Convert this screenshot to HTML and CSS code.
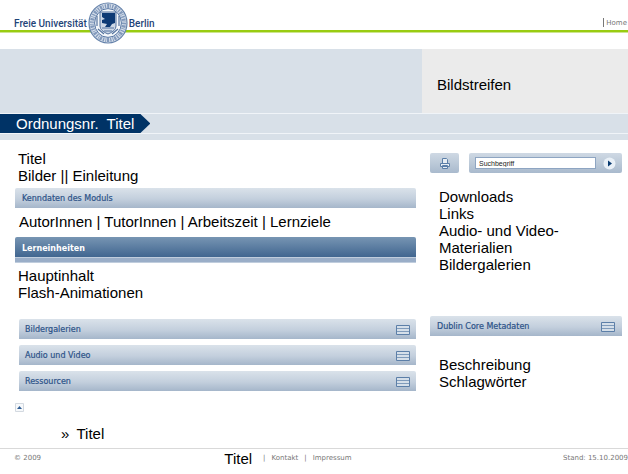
FILE: index.html
```html
<!DOCTYPE html>
<html lang="de">
<head>
    <meta charset="UTF-8">
    <meta name="viewport" content="width=device-width, initial-scale=1.0">
    <title>Freie Universität Berlin</title>
    <link rel="stylesheet" href="styles.css">
</head>
<body>
    <header class="header">
        <a class="logo" href="#">
            <span>Freie Universität</span>
            <svg class="seal" viewBox="0 0 40 42" aria-hidden="true">
                <ellipse cx="20" cy="21" rx="19" ry="20" fill="#d5deea" stroke="#6683ab" stroke-width="1.2"/>
                <ellipse cx="20" cy="21" rx="16" ry="17" fill="none" stroke="#8299bb" stroke-width="4" stroke-dasharray="1.3 1.1 2.2 .8 .8 1.2"/>
                <ellipse cx="20" cy="21" rx="13.4" ry="14.4" fill="#f4f7fa" stroke="#5575a3" stroke-width="1"/>
                <path d="M12 10v14q0 5 8 8q8-3 8-8V10z" fill="#cdd8e6" stroke="#55739f"/>
                <path d="M14 11h13v10l-3 1-2 3h-5l2-3-5-1v-3l3-1-3-2z" fill="#0d3a75"/>
                <path d="M9 14v10M31 14v10M10 27l6 5M30 27l-6 5M14 26h12M16 29h8" stroke="#55739f" stroke-width="1.2" fill="none"/>
            </svg>
            <span>Berlin</span>
        </a>
        <a class="home" href="#">Home</a>
    </header>

    <div class="hero">
        <div class="hero-image"></div>
        <div class="hero-strip">Bildstreifen</div>
    </div>
    <div class="title-band">
        <h1 class="title-arrow">Ordnungsnr.&nbsp; Titel</h1>
    </div>

    <main class="main">
        <div class="content">
            <div class="text">Titel<br>Bilder || Einleitung</div>
            <h2 class="bar">Kenndaten des Moduls</h2>
            <div class="text meta">AutorInnen | TutorInnen | Arbeitszeit | Lernziele</div>
            <h2 class="bar bar-dark">Lerneinheiten</h2>
            <div class="text">Hauptinhalt<br>Flash-Animationen</div>
            <div class="panels">
                <button class="bar">Bildergalerien
                    <svg class="list-icon" viewBox="0 0 14 10" aria-hidden="true"><path d="M.5.5h13v9H.5z" fill="#d5dfe9" stroke="#5c7fa8"/><path d="M1 3.5h12M1 6.5h12" stroke="#7f9bbb"/></svg>
                </button>
                <button class="bar">Audio und Video
                    <svg class="list-icon" viewBox="0 0 14 10" aria-hidden="true"><path d="M.5.5h13v9H.5z" fill="#d5dfe9" stroke="#5c7fa8"/><path d="M1 3.5h12M1 6.5h12" stroke="#7f9bbb"/></svg>
                </button>
                <button class="bar">Ressourcen
                    <svg class="list-icon" viewBox="0 0 14 10" aria-hidden="true"><path d="M.5.5h13v9H.5z" fill="#d5dfe9" stroke="#5c7fa8"/><path d="M1 3.5h12M1 6.5h12" stroke="#7f9bbb"/></svg>
                </button>
            </div>
            <a class="top-link" href="#" aria-label="Nach oben">
                <svg viewBox="0 0 9 9" aria-hidden="true"><path d="M.5.5h8v8h-8z" fill="#f7f9fb" stroke="#d3d9e0"/><path d="M2 6l2.500-3L7 6z" fill="#2f5d94"/></svg>
            </a>
            <div class="next">»&nbsp;&thinsp;Titel</div>
        </div>

        <aside class="sidebar">
            <form class="tools">
                <button class="print" type="button" aria-label="Drucken">
                    <svg viewBox="0 0 10 11" aria-hidden="true"><path d="M2.500 5V.5h4l1 1V5M.5 8.500v-3h9v3zM2.500 7.500h5v3h-5z" fill="#e8eef4" stroke="#5c7fa8"/></svg>
                </button>
                <div class="search">
                    <input class="search-field" type="text" value="Suchbegriff" aria-label="Suchbegriff">
                    <button class="go" type="button" aria-label="Suchen">
                        <svg viewBox="0 0 13 13" aria-hidden="true"><circle cx="6.500" cy="6.500" r="6" fill="#e9f0f7"/><path d="M5 3.500l4 3-4 3z" fill="#083a70"/></svg>
                    </button>
                </div>
            </form>
            <div class="text links">Downloads<br>Links<br>Audio- und Video-<br>Materialien<br>Bildergalerien</div>
            <button class="bar">Dublin Core Metadaten
                <svg class="list-icon" viewBox="0 0 14 10" aria-hidden="true"><path d="M.5.5h13v9H.5z" fill="#d5dfe9" stroke="#5c7fa8"/><path d="M1 3.5h12M1 6.5h12" stroke="#7f9bbb"/></svg>
            </button>
            <div class="text description">Beschreibung<br>Schlagwörter</div>
        </aside>
    </main>

    <footer class="footer">
        <span>© 2009</span>
        <nav class="footer-nav">
            <span class="footer-title">Titel</span>
            <span>|</span>
            <a href="#">Kontakt</a>
            <span>|</span>
            <a href="#">Impressum</a>
        </nav>
        <span class="date">Stand: 15.10.2009</span>
    </footer>
</body>
</html>
```
FILE: styles.css
```css
* {
    box-sizing: border-box;
}
body {
    margin: 0;
    background: #fff;
    color: #000;
    font: 15px/17px "Liberation Sans", Arial, sans-serif;
}
a {
    color: inherit;
    text-decoration: none;
}
button {
    border: 0;
    padding: 0;
    cursor: pointer;
}
svg {
    display: block;
}
h1, h2 {
    margin: 0;
    font-weight: normal;
}

/* Header */
.header {
    display: flex;
    justify-content: space-between;
    height: 49px;
    padding: 2px 1px 0 14px;
    background: linear-gradient(#99cc11 2px, #cde58e 2px) 0 30px / 100% 3px no-repeat;
}
.logo {
    display: flex;
    gap: 1px;
    height: 42px;
    color: #1f4478;
    font: 500 10px/44px Roboto, Arial, sans-serif;
}
.seal {
    width: 40px;
    height: 42px;
}
.home {
    height: 9px;
    margin-top: 16px;
    padding-left: 2px;
    border-left: 1px solid #777;
    color: #777;
    font: 7px/10px "DejaVu Sans", Verdana, sans-serif;
}

/* Image strip */
.hero {
    display: grid;
    grid-template-columns: 422fr 206fr;
    height: 64px;
    background: #d8e0e8;
}
.hero-strip {
    padding: 27px 15px 0;
    background: #ebebeb;
}
.title-band {
    height: 27px;
    border-top: 1px solid #f0f4f8;
    background: linear-gradient(#d8e0e8 19px, #f0f4f8 19px, #f0f4f8 20px, #d8e0e8 20px);
}
.title-arrow {
    width: max-content;
    height: 19px;
    padding: 0 16px;
    background: #003366;
    clip-path: polygon(0 0, calc(100% - 10px) 0, 100% 50%, calc(100% - 10px) 100%, 0 100%);
    color: #fff;
    font-size: 15px;
    line-height: 19px;
}

/* Columns */
.main {
    display: grid;
    grid-template-columns: 401fr 192fr;
    gap: 14px;
    padding: 10px 6px 6px 15px;
}
.text {
    padding-left: 3px;
}
.bar {
    display: flex;
    align-items: center;
    justify-content: space-between;
    width: 100%;
    height: 20px;
    padding: 2px 7px 0;
    border-radius: 2px 2px 0 0;
    background: linear-gradient(#dae2ea, #c3cfdd 55%, #a5b6ca);
    color: #2c5288;
    font: 8px/18px "DejaVu Sans", Verdana, sans-serif;
    -webkit-text-stroke: 0.2px #2c5288;
}
.content > .bar {
    margin-top: 4px;
}
.content .meta {
    padding: 5px 0 3px 4px;
}
.content > .bar-dark {
    height: 26px;
    margin-bottom: 4px;
    padding-bottom: 5px;
    background: linear-gradient(#7795b3, #416690 20px, #c0cddd 20px, #c0cddd 21px, #9aaec8 21px, #9aaec8 25px, #c0cddd 25px);
    color: #fff;
    font-weight: bold;
    -webkit-text-stroke: 0;
}
.list-icon {
    width: 14px;
    height: 10px;
}
.panels {
    display: grid;
    gap: 6px;
    margin: 18px 0 12px 4px;
}
.panels .bar {
    padding: 1px 6px 0;
}
.top-link {
    display: block;
    width: 9px;
    height: 9px;
}
.next {
    margin-top: 13px;
    padding-left: 46px;
}

/* Sidebar */
.tools {
    display: flex;
    gap: 10px;
    margin: 3px 0 15px;
}
.print, .search {
    display: flex;
    align-items: center;
    height: 20px;
    border-radius: 2px;
    background: linear-gradient(#cfd9e4, #a9bacd);
}
.print {
    justify-content: center;
    width: 29px;
}
.print svg {
    width: 10px;
    height: 11px;
}
.search {
    flex: 1;
    gap: 7px;
    padding: 0 6px;
}
.search-field {
    flex: 1;
    min-width: 0;
    height: 12px;
    padding: 0 3px;
    border: 1px solid #8ea5c2;
    background: #fff;
    color: #222;
    font: 7px/10px "Liberation Sans", Arial, sans-serif;
}
.go {
    background: none;
}
.go svg {
    width: 13px;
    height: 13px;
}
.sidebar .text {
    padding-left: 9px;
}
.links {
    margin-bottom: 43px;
}
.description {
    margin-top: 20px;
}

/* Footer */
.footer {
    display: grid;
    grid-template-columns: 210fr 300fr 103fr;
    align-items: center;
    padding-left: 14px;
    border-top: 1px solid #d9d9d9;
    color: #777;
    font: 7px/19px "DejaVu Sans", Verdana, sans-serif;
}
.footer-nav {
    display: flex;
    gap: 6px;
}
.footer-title {
    margin-right: 5px;
    color: #000;
    font: 15px/19px "Liberation Sans", Arial, sans-serif;
}
.date {
    text-align: right;
}
```
